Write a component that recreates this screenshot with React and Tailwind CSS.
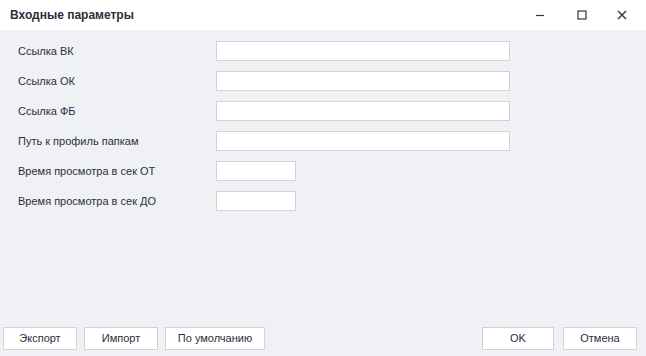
import React from "react";

const font = { fontFamily: '"Liberation Sans", Arial, sans-serif' };

function Row({ label, short }) {
  return (
    <div className="flex items-center h-[20px]">
      <div className="w-[198px] text-[11px] text-[#2b303b]">{label}</div>
      <input
        className={`h-[20px] ${short ? "w-[80px]" : "w-[294px]"} bg-white border border-[#d0d3db] outline-none`}
      />
    </div>
  );
}

function Btn({ children, w }) {
  return (
    <button
      className={`h-[23px] ${w} bg-white border border-[#d0d3db] text-[11px] text-[#2b303b] flex items-center justify-center`}
    >
      {children}
    </button>
  );
}

export default function App() {
  return (
    <div className="w-[646px] h-[356px] flex flex-col bg-[#f0f1f5] overflow-hidden" style={font}>
      <div className="h-[30px] bg-white flex items-center justify-between shrink-0">
        <div className="pl-[10px] text-[12px] font-bold text-[#2b303b]">Входные параметры</div>
        <div className="flex items-center h-full text-[#2d3340]">
          <div className="w-[40px] h-full flex items-center justify-center">
            <svg width="10" height="10" viewBox="0 0 10 10">
              <path d="M1 5.5h8" stroke="currentColor" strokeWidth="1.2" />
            </svg>
          </div>
          <div className="w-[40px] h-full flex items-center justify-center ml-[2px]">
            <svg width="10" height="10" viewBox="0 0 10 10">
              <rect x="1" y="1" width="8" height="8" fill="none" stroke="currentColor" strokeWidth="1.2" />
            </svg>
          </div>
          <div className="w-[40px] h-full flex items-center justify-center mr-[4px]">
            <svg width="10" height="10" viewBox="0 0 10 10">
              <path d="M1 1L9 9M9 1L1 9" stroke="currentColor" strokeWidth="1.4" />
            </svg>
          </div>
        </div>
      </div>
      <div className="flex-1 pt-[11px] pl-[18px] flex flex-col gap-[10px]">
        <Row label="Ссылка ВК" />
        <Row label="Ссылка ОК" />
        <Row label="Ссылка ФБ" />
        <Row label="Путь к профиль папкам" />
        <Row label="Время просмотра в сек ОТ" short />
        <Row label="Время просмотра в сек ДО" short />
      </div>
      <div className="flex items-center justify-between pl-[3px] pr-[9px] pb-[6px] shrink-0">
        <div className="flex gap-[7px]">
          <Btn w="w-[74px]">Экспорт</Btn>
          <Btn w="w-[74px]">Импорт</Btn>
          <Btn w="w-[100px]">По умолчанию</Btn>
        </div>
        <div className="flex gap-[9px]">
          <Btn w="w-[72px]">OK</Btn>
          <Btn w="w-[74px]">Отмена</Btn>
        </div>
      </div>
    </div>
  );
}
